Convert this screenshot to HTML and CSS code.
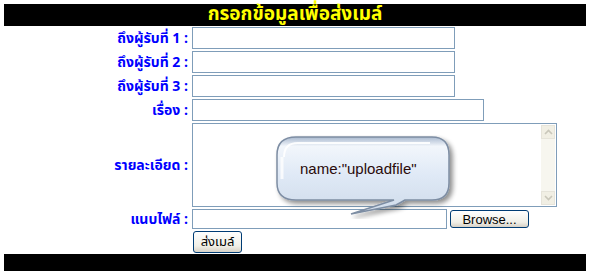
FILE: index.html
```html
<!DOCTYPE html>
<html lang="th">
<head>
<meta charset="utf-8">
<title>ส่งเมล์</title>
<link rel="stylesheet" href="styles.css">
</head>
<body>
<div class="page">
  <div class="title-bar">กรอกข้อมูลเพื่อส่งเมล์</div>
  <form class="form">
    <div class="row"><label class="lbl">ถึงผู้รับที่ 1 :</label><span class="field w1"></span></div>
    <div class="row"><label class="lbl">ถึงผู้รับที่ 2 :</label><span class="field w1"></span></div>
    <div class="row"><label class="lbl">ถึงผู้รับที่ 3 :</label><span class="field w1"></span></div>
    <div class="row"><label class="lbl">เรื่อง :</label><span class="field w2"></span></div>
    <div class="row tall"><label class="lbl">รายละเอียด :</label>
      <span class="area">
        <span class="sbar">
          <span class="sbtn"><svg width="9" height="6" viewBox="0 0 9 6"><path d="M1 5 L4.5 1.5 L8 5" fill="none" stroke="#c9c7ba" stroke-width="1.6"/></svg></span>
          <span class="sbtn"><svg width="9" height="6" viewBox="0 0 9 6"><path d="M1 1 L4.5 4.5 L8 1" fill="none" stroke="#c9c7ba" stroke-width="1.6"/></svg></span>
        </span>
      </span>
    </div>
    <div class="row file"><label class="lbl">แนบไฟล์ :</label><span class="field w3"></span><span class="btn browse">Browse...</span></div>
    <div class="row submit"><span class="lbl"></span><span class="btn send">ส่งเมล์</span></div>
  </form>
  <div class="foot-bar"></div>
  <div class="balloon">
    <svg class="balloon-shape" width="184" height="84" viewBox="0 0 184 84">
      <defs>
        <linearGradient id="bg" x1="0" y1="0" x2="0" y2="1">
          <stop offset="0" stop-color="#a9b9cf"/>
          <stop offset="0.12" stop-color="#f2f6fb"/>
          <stop offset="0.5" stop-color="#dfe9f6"/>
          <stop offset="1" stop-color="#cfdbea"/>
        </linearGradient>
        <filter id="sh" x="-10%" y="-10%" width="130%" height="140%">
          <feGaussianBlur in="SourceAlpha" stdDeviation="2.5"/>
          <feOffset dx="3" dy="3"/>
          <feComponentTransfer><feFuncA type="linear" slope="0.45"/></feComponentTransfer>
          <feMerge><feMergeNode/><feMergeNode in="SourceGraphic"/></feMerge>
        </filter>
      </defs>
      <path filter="url(#sh)" d="M22 2 H158 Q175 2 175 20 V48 Q175 65 158 65 H131 Q126 68 122 70 L77 79 L120 65 H22 Q3 65 3 48 V20 Q3 2 22 2 Z" fill="url(#bg)" stroke="#7d8da3" stroke-width="1.5"/>
      <path d="M10 22 Q10 8 24 8 H156" fill="none" stroke="#ffffff" stroke-width="2" opacity="0.9"/>
      <path d="M8 22 V44" stroke="#ffffff" stroke-width="3" opacity="0.8"/>
    </svg>
    <span class="balloon-text">name:"uploadfile"</span>
  </div>
</div>
</body>
</html>
```
FILE: styles.css
```css
html, body {
  margin: 0;
  padding: 0;
  background: #ffffff;
}
.page {
  position: relative;
  width: 592px;
  height: 276px;
  padding: 4px 6px 0 4px;
  box-sizing: border-box;
  font-family: Tahoma, "Noto Sans Thai", "Noto Sans", "DejaVu Sans", sans-serif;
}
.title-bar {
  height: 22px;
  background: #000000;
  color: #ffff00;
  font-weight: bold;
  font-size: 19px;
  line-height: 22px;
  text-align: center;
}
.form {
  display: flex;
  flex-direction: column;
  gap: 2px;
  padding-top: 1px;
}
.row {
  display: flex;
  align-items: center;
  height: 22px;
}
.row.tall { height: 84px; }
.row.file { height: 20px; }
.row.submit { height: 22px; }
.lbl {
  width: 184px;
  flex: none;
  text-align: right;
  color: #0000ff;
  font-weight: bold;
  font-size: 14px;
  padding-right: 4px;
}
.field {
  display: block;
  box-sizing: border-box;
  height: 22px;
  border: 1px solid #7f9db9;
  background: #ffffff;
}
.w1 { width: 263px; }
.w2 { width: 292px; }
.w3 { width: 255px; height: 20px; }
.area {
  display: flex;
  justify-content: flex-end;
  box-sizing: border-box;
  width: 365px;
  height: 84px;
  border: 1px solid #7f9db9;
  background: #ffffff;
}
.sbar {
  width: 14px;
  margin: 1px;
  background: #f7f6ef;
  display: flex;
  flex-direction: column;
  justify-content: space-between;
}
.sbtn {
  height: 14px;
  display: flex;
  align-items: center;
  justify-content: center;
  background: #f1efe4;
  border: 1px solid #e6e4da;
  box-sizing: border-box;
}
.btn {
  display: flex;
  align-items: center;
  justify-content: center;
  box-sizing: border-box;
  border: 1px solid #003c74;
  border-radius: 3px;
  background: linear-gradient(#ffffff, #f0efe7 70%, #d6d0c5);
  color: #000000;
  font-size: 13px;
}
.browse {
  margin-left: 3px;
  width: 79px;
  height: 18px;
  font-family: "Liberation Sans", Arial, sans-serif;
}
.send {
  margin-left: 1px;
  width: 49px;
  height: 22px;
}
.foot-bar {
  height: 17px;
  background: #000000;
  margin-top: 1px;
}
.balloon {
  position: absolute;
  left: 274px;
  top: 135px;
  width: 184px;
  height: 84px;
}
.balloon-shape {
  position: absolute;
  left: 0;
  top: 0;
}
.balloon-text {
  position: absolute;
  left: 26px;
  top: 25px;
  font-family: "Liberation Sans", Arial, sans-serif;
  font-size: 15px;
  color: #2a0a0a;
  white-space: nowrap;
}
```
